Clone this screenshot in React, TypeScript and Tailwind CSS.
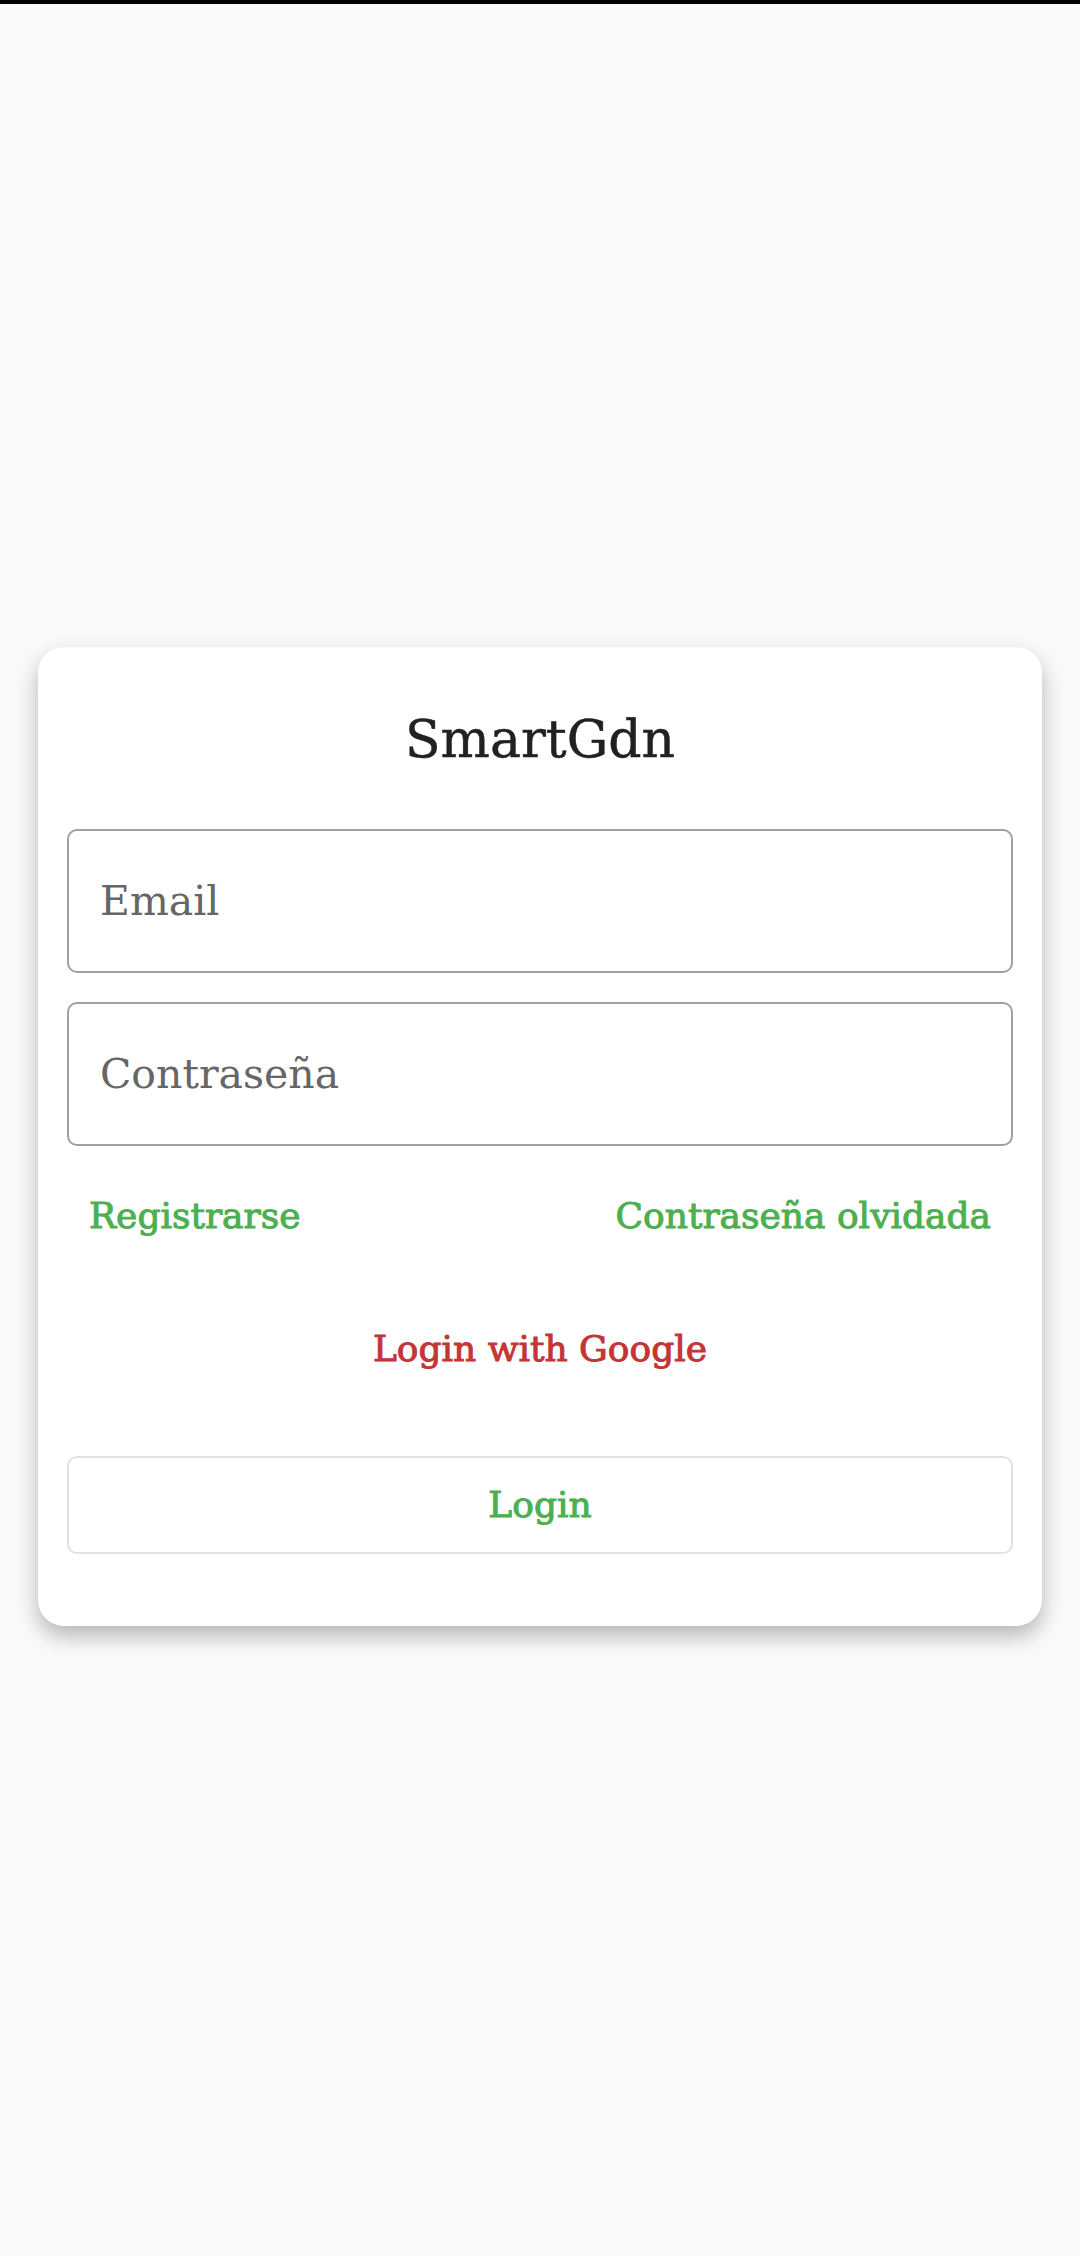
const slab = { fontFamily: '"DejaVu Serif", "Liberation Serif", serif' };

const Field = ({ placeholder, type }: { placeholder: string; type: string }) => (
  <input
    type={type}
    placeholder={placeholder}
    className="h-[144px] w-full rounded-[10px] border-2 border-[#a0a0a0] bg-white pl-[31px] text-[41px] text-[#222] outline-none placeholder:text-[#666]"
    style={slab}
  />
);

const App = () => {
  return (
    <div className="flex min-h-screen flex-col bg-[#fafafa]" style={slab}>
      <div className="h-[4px] bg-black" />
      <div className="flex flex-1 items-center justify-center px-[38px] pt-[12px]">
        <div className="w-full rounded-[26px] bg-white px-[29px] pt-[56px] pb-[72px] shadow-[0_10px_22px_rgba(0,0,0,0.28)]">
          <h1 className="h-[72px] text-center text-[52px] leading-[72px] text-[#212121] [-webkit-text-stroke:0.5px_#212121]">
            SmartGdn
          </h1>

          <div className="mt-[54px] flex flex-col gap-[29px]">
            <Field placeholder="Email" type="email" />
            <Field placeholder="Contraseña" type="password" />
          </div>

          <div className="mt-[46px] flex h-[48px] items-center justify-between px-[22px] text-[36px] leading-[48px] text-[#4caf50] [-webkit-text-stroke:1px_#4caf50]">
            <span>Registrarse</span>
            <span>Contraseña olvidada</span>
          </div>

          <div className="mt-[85px] h-[48px] text-center text-[36px] leading-[48px] text-[#c43535] [-webkit-text-stroke:1px_#c43535]">
            Login with Google
          </div>

          <button
            className="mt-[83px] flex h-[98px] w-full items-center justify-center rounded-[10px] border-2 border-[#e2e2e2] bg-white text-[36px] text-[#4caf50] [-webkit-text-stroke:1px_#4caf50]"
            style={slab}
          >
            Login
          </button>
        </div>
      </div>
    </div>
  );
};

export default App;
